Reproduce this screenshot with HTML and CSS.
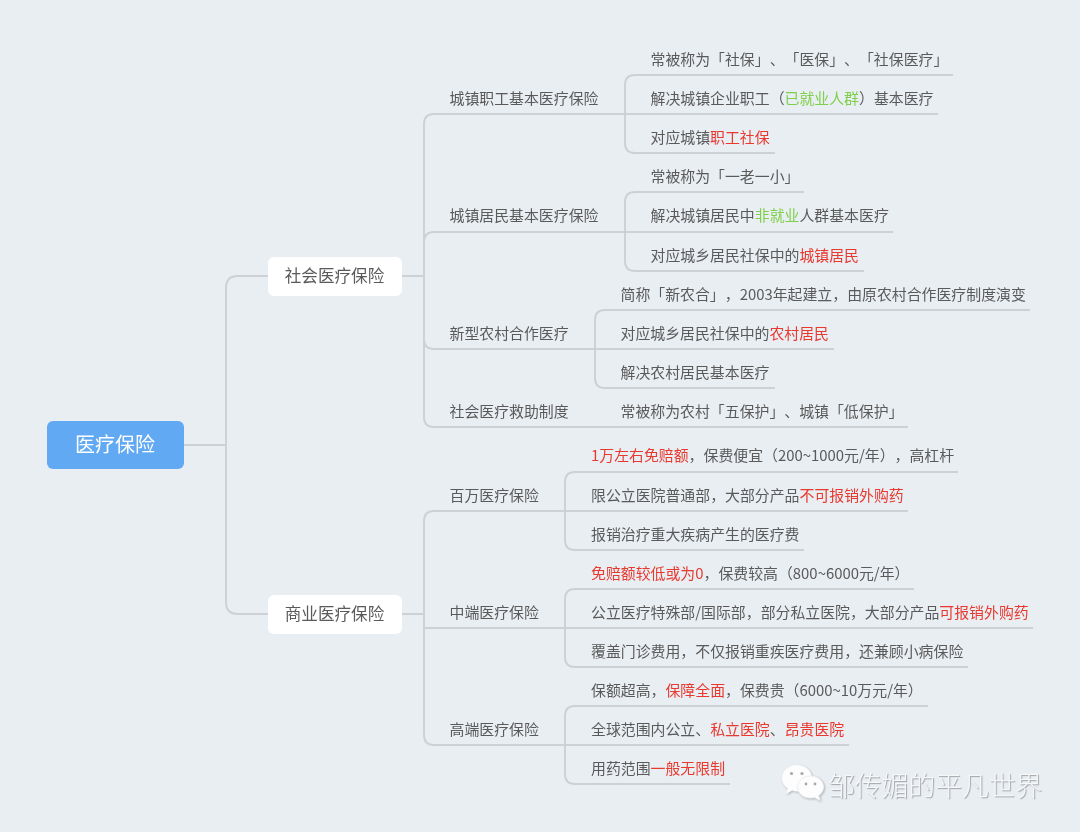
FILE: index.html
```html
<!DOCTYPE html>
<html lang="zh-CN">
<head>
<meta charset="utf-8">
<title>医疗保险</title>
<link rel="stylesheet" href="styles.css">
</head>
<body>
<main class="map">
  <svg class="links" width="1080" height="832" viewBox="0 0 1080 832" fill="none">
    <path d="M184 445H226M268 276H238Q226 276 226 288V602Q226 614 238 614H268"/>
    <path d="M402 276H424M424 417V124Q424 114 434 114H625M424 242Q424 232 434 232H625M424 339Q424 349 434 349H595M424 417Q424 427 434 427H908"/>
    <path d="M953 75H635Q625 75 625 85V143Q625 153 635 153H775M625 114H938"/>
    <path d="M804 192H635Q625 192 625 202V261Q625 271 635 271H864M625 232H893"/>
    <path d="M1030 310H605Q595 310 595 320V378Q595 388 605 388H775M595 349H834"/>
    <path d="M402 614H424M424 521Q424 511 434 511H565M424 521V735Q424 745 434 745H565M424 628H565"/>
    <path d="M958 472H575Q565 472 565 482V540Q565 550 575 550H804M565 511H908"/>
    <path d="M914 589H575Q565 589 565 599V657Q565 667 575 667H968M565 628H1033"/>
    <path d="M928 706H575Q565 706 565 716V774Q565 784 575 784H730M565 745H849"/>
  </svg>

  <div class="root"><span class="label">医疗保险</span></div>
  <div class="branch" style="top:257px"><span class="label">社会医疗保险</span></div>
  <div class="branch" style="top:595px"><span class="label">商业医疗保险</span></div>

  <div class="node" style="left:449.5px;top:88px">城镇职工基本医疗保险</div>
  <div class="node" style="left:449.5px;top:205px">城镇居民基本医疗保险</div>
  <div class="node" style="left:449.5px;top:323px">新型农村合作医疗</div>
  <div class="node" style="left:449.5px;top:401px">社会医疗救助制度</div>
  <div class="node" style="left:449.5px;top:485px">百万医疗保险</div>
  <div class="node" style="left:449.5px;top:602px">中端医疗保险</div>
  <div class="node" style="left:449.5px;top:719px">高端医疗保险</div>

  <div class="node" style="left:650.5px;top:49px">常被称为「社保」、「医保」、「社保医疗」</div>
  <div class="node" style="left:650.5px;top:88px">解决城镇企业职工（<span class="green">已就业人群</span>）基本医疗</div>
  <div class="node" style="left:650.5px;top:127px">对应城镇<span class="red">职工社保</span></div>

  <div class="node" style="left:650.5px;top:166px">常被称为「一老一小」</div>
  <div class="node" style="left:650.5px;top:205px">解决城镇居民中<span class="green">非就业</span>人群基本医疗</div>
  <div class="node" style="left:650.5px;top:245px">对应城乡居民社保中的<span class="red">城镇居民</span></div>

  <div class="node" style="left:620.5px;top:284px">简称「新农合」，2003年起建立，由原农村合作医疗制度演变</div>
  <div class="node" style="left:620.5px;top:323px">对应城乡居民社保中的<span class="red">农村居民</span></div>
  <div class="node" style="left:620.5px;top:362px">解决农村居民基本医疗</div>
  <div class="node" style="left:620.5px;top:401px">常被称为农村「五保护」、城镇「低保护」</div>

  <div class="node" style="left:591px;top:445px"><span class="red">1万左右免赔额</span>，保费便宜（200~1000元/年），高杠杆</div>
  <div class="node" style="left:591px;top:485px">限公立医院普通部，大部分产品<span class="red">不可报销外购药</span></div>
  <div class="node" style="left:591px;top:524px">报销治疗重大疾病产生的医疗费</div>

  <div class="node" style="left:591px;top:563px"><span class="red">免赔额较低或为0</span>，保费较高（800~6000元/年）</div>
  <div class="node" style="left:591px;top:602px">公立医疗特殊部/国际部，部分私立医院，大部分产品<span class="red">可报销外购药</span></div>
  <div class="node" style="left:591px;top:641px">覆盖门诊费用，不仅报销重疾医疗费用，还兼顾小病保险</div>

  <div class="node" style="left:591px;top:680px">保额超高，<span class="red">保障全面</span>，保费贵（6000~10万元/年）</div>
  <div class="node" style="left:591px;top:719px">全球范围内公立、<span class="red">私立医院</span>、<span class="red">昂贵医院</span></div>
  <div class="node" style="left:591px;top:758px">用药范围<span class="red">一般无限制</span></div>

  <div class="mark">
    <svg class="mark-icon" width="46" height="40" viewBox="0 0 46 40">
      <path class="bubble" d="M16 1C7.700 1 1 6.900 1 14.200C1 18.400 3.200 22 6.700 24.400L5 30L11.200 26.600C13 27.200 14.500 27.400 16 27.400C24.300 27.400 31 21.500 31 14.200C31 6.900 24.300 1 16 1Z"/>
      <path class="bubble front" d="M29.500 12C22.300 12 16.500 16.900 16.500 23C16.500 29.100 22.300 34 29.500 34C31 34 32.300 33.800 33.600 33.400L39 36.400L37.600 31.600C40.600 29.600 42.500 26.500 42.500 23C42.500 16.900 36.700 12 29.500 12Z"/>
      <circle class="eye" cx="10.500" cy="9.500" r="1.600"/>
      <circle class="eye" cx="21" cy="9.500" r="1.600"/>
      <circle class="eye" cx="25" cy="20" r="1.400"/>
      <circle class="eye" cx="34" cy="20" r="1.400"/>
    </svg>
    <span class="mark-text">邹传媚的平凡世界</span>
  </div>
</main>
</body>
</html>
```

FILE: styles.css
```css
html, body {
  margin: 0;
  padding: 0;
  background: #e9eef3;
}

.map {
  position: relative;
  width: 1080px;
  height: 832px;
  overflow: hidden;
  background: #e9eef3;
  font-family: "Noto Sans CJK SC", "Noto Sans", sans-serif;
  color: #5a5a5a;
  text-spacing-trim: space-all;
  filter: blur(0.3px);
}

.links {
  position: absolute;
  left: 0;
  top: 0;
}

.links path {
  stroke: #cdd0d4;
  stroke-width: 1.9;
}

.root {
  position: absolute;
  left: 47px;
  top: 421px;
  width: 137px;
  height: 48px;
  display: flex;
  align-items: center;
  justify-content: center;
  background: #61a9f3;
  border-radius: 6px;
  color: #fff;
  font-size: 20px;
}

.branch {
  position: absolute;
  left: 268px;
  width: 134px;
  height: 39px;
  display: flex;
  align-items: center;
  justify-content: center;
  background: #fff;
  border-radius: 6px;
  font-size: 16.6px;
}

.label {
  padding: 0 1px 3px 0;
}

.node {
  position: absolute;
  height: 20px;
  line-height: 20px;
  font-size: 14.9px;
  white-space: nowrap;
  margin-top: -0.5px;
}

.red { color: #e8392f; }
.green { color: #7ed04b; }

.mark {
  position: absolute;
  left: 781px;
  top: 762px;
  display: flex;
  align-items: center;
  gap: 1px;
}

.mark-icon {
  filter: drop-shadow(1px 1px 1px rgba(90, 90, 90, 0.4));
}

.bubble { fill: #fdfdfd; }
.front { stroke: #e9eef3; stroke-width: 1; }
.eye { fill: #a8a8a8; }

.mark-text {
  padding-top: 3px;
  font-size: 26.8px;
  line-height: 40px;
  font-weight: 300;
  color: #f6f7f8;
  white-space: nowrap;
  text-shadow: 1px 1px 1px rgba(90, 90, 90, 0.5);
}
```
